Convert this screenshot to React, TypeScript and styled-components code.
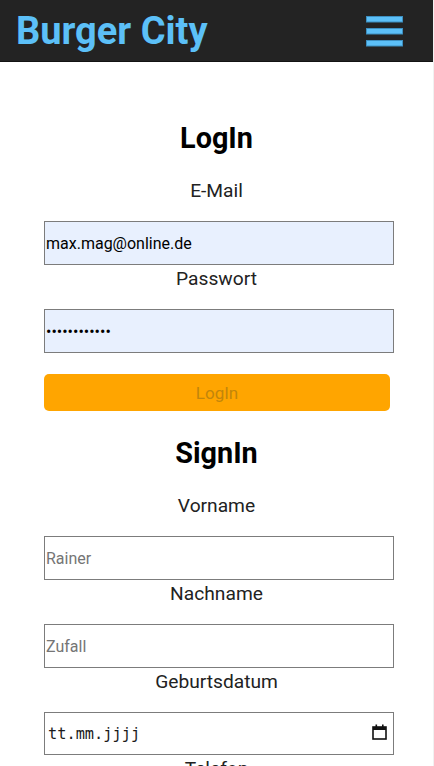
import React from 'react'
import styled, { createGlobalStyle } from 'styled-components'

const GlobalStyle = createGlobalStyle`
  html {
    background: #f1f1f1;
  }
  body {
    margin: 0 1px 0 0;
    background: #ffffff;
    font-family: Roboto, 'Liberation Sans', Arial, sans-serif;
    color: #222222;
  }
  * {
    box-sizing: border-box;
  }
`

const Header = styled.header`
  height: 62px;
  background: #232323;
  border-bottom: 1px solid #131313;
  display: flex;
  align-items: center;
  justify-content: space-between;
  padding: 0 30px 0 16px;
`

const Brand = styled.h1`
  margin: 0;
  font-size: 38px;
  font-weight: 700;
  line-height: 44px;
  color: #5cc0f8;
`

const MenuButton = styled.button`
  border: 0;
  padding: 0;
  background: transparent;
  display: flex;
  margin-top: 1px;
`

const Form = styled.form`
  padding: 34px 0 40px;
  display: flex;
  flex-direction: column;
`

const Title = styled.h2`
  margin: 25px 0 22px;
  font-size: 28.8px;
  line-height: 34px;
  font-weight: 700;
  text-align: center;
  color: #000000;
`

const Label = styled.label`
  display: block;
  margin: 3px 0 19px;
  font-size: 19.2px;
  line-height: 22px;
  text-align: center;
  color: #222222;
`

const Input = styled.input<{ $filled?: boolean; $mono?: boolean }>`
  display: block;
  width: 350px;
  height: ${(p) => (p.$mono ? 43 : 44)}px;
  margin-left: 44px;
  padding: ${(p) => (p.$mono ? '0 3px' : '0 1px')};
  border: 1px solid #7c7c7c;
  background: ${(p) => (p.$filled ? '#e8f0fe' : '#ffffff')};
  font-family: ${(p) =>
    p.$mono ? "'DejaVu Sans Mono', monospace" : "Roboto, 'Liberation Sans', sans-serif"};
  font-size: ${(p) => (p.$mono ? 15.3 : 16)}px;
  color: #000000;
  outline: none;
  &::placeholder {
    color: ${(p) => (p.$mono ? '#1a1a1a' : '#757575')};
  }
`

const DateWrap = styled.div`
  position: relative;
`

const CalendarIcon = styled.svg`
  position: absolute;
  left: 372px;
  top: 12px;
  pointer-events: none;
`

const SubmitButton = styled.button`
  display: block;
  width: 346px;
  height: 37px;
  margin: 21px 0 0 44px;
  border: 0;
  border-radius: 5px;
  background: #ffa500;
  color: #c2850b;
  font-family: Roboto, 'Liberation Sans', sans-serif;
  font-size: 17px;
`

const Menu = () => (
  <svg width='37' height='31' viewBox='0 0 37 31'>
    {[0, 12, 24].map((y) => (
      <rect
        key={y}
        x='0.5'
        y={y + 0.5}
        width='36'
        height='5.5'
        fill='#5cc0f8'
        stroke='#3d8fc0'
        strokeWidth='1'
      />
    ))}
  </svg>
)

const Calendar = () => (
  <CalendarIcon width='15' height='16' viewBox='0 0 15 16'>
    <rect x='1' y='3' width='13' height='12' fill='none' stroke='#111' strokeWidth='1.6' />
    <rect x='1' y='3' width='13' height='3' fill='#111' />
    <rect x='3.5' y='0.5' width='1.6' height='3' fill='#111' />
    <rect x='10' y='0.5' width='1.6' height='3' fill='#111' />
  </CalendarIcon>
)

export default function App() {
  return (
    <>
      <GlobalStyle />
      <Header>
        <Brand>Burger City</Brand>
        <MenuButton type='button' aria-label='Menü'>
          <Menu />
        </MenuButton>
      </Header>
      <Form onSubmit={(e) => e.preventDefault()}>
        <Title>LogIn</Title>
        <Label htmlFor='login-mail'>E-Mail</Label>
        <Input id='login-mail' $filled defaultValue='max.mag@online.de' />
        <Label htmlFor='login-pass'>Passwort</Label>
        <Input id='login-pass' type='password' $filled defaultValue='geheim123456' />
        <SubmitButton type='submit' disabled>
          LogIn
        </SubmitButton>

        <Title>SignIn</Title>
        <Label htmlFor='vorname'>Vorname</Label>
        <Input id='vorname' placeholder='Rainer' />
        <Label htmlFor='nachname'>Nachname</Label>
        <Input id='nachname' placeholder='Zufall' />
        <Label htmlFor='geburt'>Geburtsdatum</Label>
        <DateWrap>
          <Input id='geburt' $mono placeholder='tt.mm.jjjj' />
          <Calendar />
        </DateWrap>
        <Label htmlFor='telefon'>Telefon</Label>
        <Input id='telefon' placeholder='0123 456789' />
        <Label htmlFor='signin-mail'>E-Mail</Label>
        <Input id='signin-mail' placeholder='rainer@zufall.de' />
        <Label htmlFor='signin-pass'>Passwort</Label>
        <Input id='signin-pass' type='password' />
        <SubmitButton type='submit' disabled>
          SignIn
        </SubmitButton>
      </Form>
    </>
  )
}
